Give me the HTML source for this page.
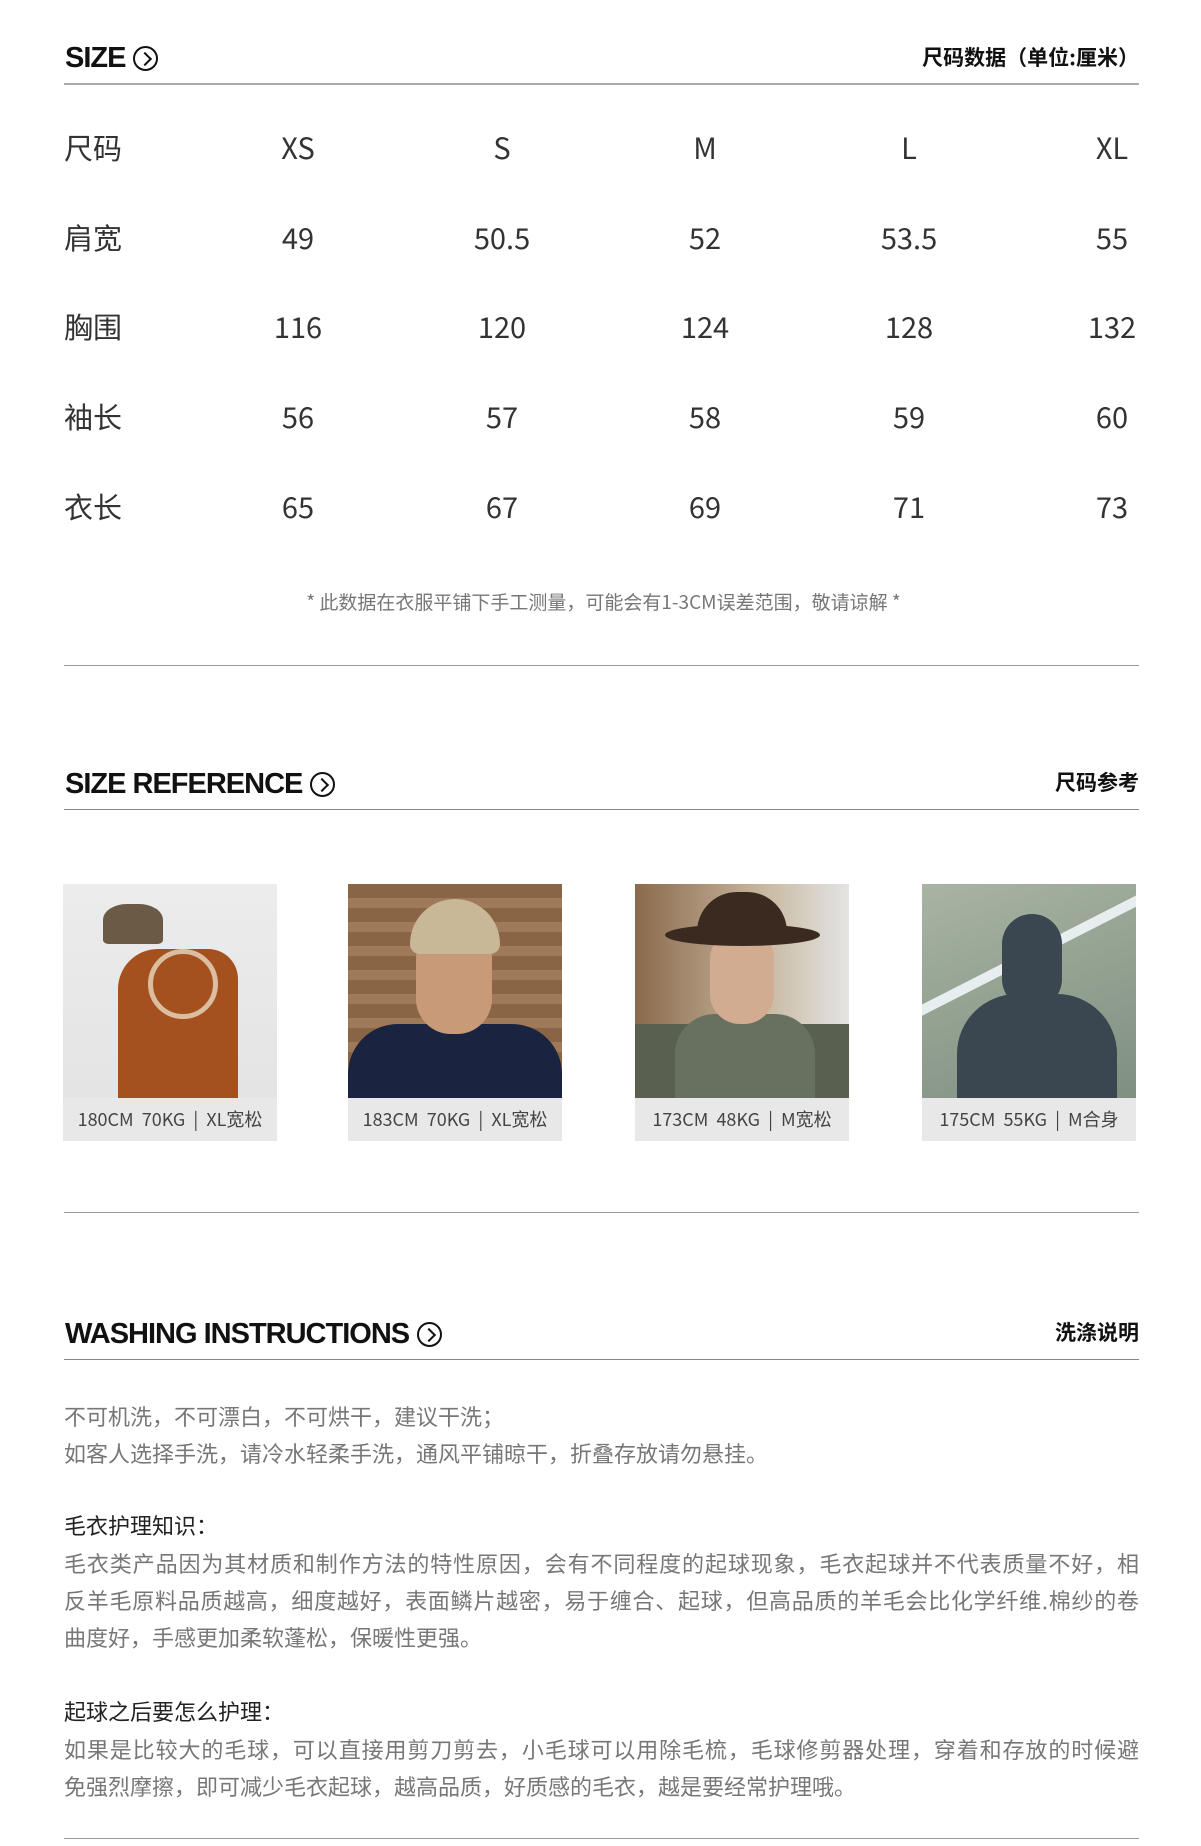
<!DOCTYPE html>
<html><head><meta charset="utf-8"><style>
*{margin:0;padding:0;box-sizing:border-box}
body{width:1201px;height:1846px;background:#fff;position:relative;font-family:"Noto Sans CJK SC","Liberation Sans",sans-serif;color:#222;overflow:hidden}
.a{position:absolute}
.h{font-family:"Liberation Sans",sans-serif;font-weight:bold;font-size:29px;letter-spacing:-1px;color:#111;white-space:nowrap;display:flex;align-items:center}
.ic{display:inline-block;width:25px;height:25px;border:2px solid #111;border-radius:50%;margin-left:8px;position:relative}
.ic:after{content:"";position:absolute;left:5px;top:6px;width:8px;height:8px;border-right:2px solid #111;border-top:2px solid #111;transform:rotate(45deg)}
.r{font-size:21px;font-weight:bold;color:#111;white-space:nowrap;line-height:30px}
.line{left:64px;width:1075px;height:2px;background:#aaa}
.thin{left:64px;width:1075px;height:1px;background:#999}
.row{left:64px;width:1075px;height:40px;font-size:29px;line-height:40px;color:#333}
.row span{position:absolute;top:0;transform:translateX(-50%)}
.row span:first-child{transform:none;left:0}
.p{left:64px;width:1075px;font-size:22px;color:#777;line-height:37px;white-space:nowrap}
.p div.j{text-align:justify;text-align-last:justify}
.b{color:#222}
.img{width:214px;height:257px;top:884px;overflow:hidden;background:#e8e8e8}
.img .ph{height:214px;position:relative;overflow:hidden}
.img .cap{height:43px;line-height:43px;font-size:18px;color:#444;text-align:center;white-space:nowrap}
</style></head><body>

<div class="a h" style="left:65px;top:42px">SIZE<span class="ic"></span></div>
<div class="a r" style="right:62px;top:42px">尺码数据（单位:厘米）</div>
<div class="a line" style="top:83px"></div>

<div class="a row" style="top:127px"><span>尺码</span><span style="left:234px">XS</span><span style="left:438px">S</span><span style="left:641px">M</span><span style="left:845px">L</span><span style="left:1048px">XL</span></div>
<div class="a row" style="top:217px"><span>肩宽</span><span style="left:234px">49</span><span style="left:438px">50.5</span><span style="left:641px">52</span><span style="left:845px">53.5</span><span style="left:1048px">55</span></div>
<div class="a row" style="top:306px"><span>胸围</span><span style="left:234px">116</span><span style="left:438px">120</span><span style="left:641px">124</span><span style="left:845px">128</span><span style="left:1048px">132</span></div>
<div class="a row" style="top:396px"><span>袖长</span><span style="left:234px">56</span><span style="left:438px">57</span><span style="left:641px">58</span><span style="left:845px">59</span><span style="left:1048px">60</span></div>
<div class="a row" style="top:486px"><span>衣长</span><span style="left:234px">65</span><span style="left:438px">67</span><span style="left:641px">69</span><span style="left:845px">71</span><span style="left:1048px">73</span></div>

<div class="a" style="left:0;width:1207px;top:589px;text-align:center;font-size:19px;line-height:26px;color:#777">* 此数据在衣服平铺下手工测量，可能会有1-3CM误差范围，敬请谅解 *</div>
<div class="a thin" style="top:665px"></div>

<div class="a h" style="left:65px;top:768px">SIZE REFERENCE<span class="ic"></span></div>
<div class="a r" style="right:62px;top:767px">尺码参考</div>
<div class="a line" style="top:809px;height:1px;background:#888"></div>

<div class="a img" style="left:63px"><div class="ph" style="background:linear-gradient(#ececec,#e4e4e4)">
<div class="a" style="left:55px;top:65px;width:120px;height:160px;background:#a4511f;border-radius:40px 30px 0 0"></div>
<div class="a" style="left:40px;top:20px;width:60px;height:40px;background:#6b5a45;border-radius:40% 40% 10% 10%"></div>
<div class="a" style="left:85px;top:65px;width:70px;height:70px;border:5px solid #e8d8c0;border-radius:50%;opacity:.8"></div>
</div><div class="cap">180CM&nbsp; 70KG &nbsp;|&nbsp; XL宽松</div></div>

<div class="a img" style="left:348px"><div class="ph" style="background:repeating-linear-gradient(#8a6545 0 14px,#a07a58 14px 24px)">
<div class="a" style="left:0;top:140px;width:214px;height:74px;background:#1a2440;border-radius:50px 50px 0 0"></div>
<div class="a" style="left:68px;top:40px;width:76px;height:110px;background:#c89a78;border-radius:35px"></div>
<div class="a" style="left:62px;top:15px;width:90px;height:55px;background:#c8b898;border-radius:45px 45px 10px 10px"></div>
</div><div class="cap">183CM&nbsp; 70KG &nbsp;|&nbsp; XL宽松</div></div>

<div class="a img" style="left:635px"><div class="ph" style="background:linear-gradient(90deg,#8a6a4c,#c8b8a0 60%,#e4e4e4)">
<div class="a" style="left:0;top:140px;width:214px;height:74px;background:#5a6050"></div>
<div class="a" style="left:40px;top:130px;width:140px;height:84px;background:#687060;border-radius:40px 40px 0 0"></div>
<div class="a" style="left:75px;top:45px;width:64px;height:95px;background:#d2ac90;border-radius:30px"></div>
<div class="a" style="left:30px;top:40px;width:155px;height:22px;background:#3a2a20;border-radius:50%"></div>
<div class="a" style="left:62px;top:8px;width:90px;height:45px;background:#3a2a20;border-radius:40px 40px 5px 5px"></div>
</div><div class="cap">173CM&nbsp; 48KG &nbsp;|&nbsp; M宽松</div></div>

<div class="a img" style="left:922px"><div class="ph" style="background:linear-gradient(160deg,#a8b4a4,#7f8f80)">
<div class="a" style="left:-20px;top:60px;width:280px;height:10px;background:#e8eef0;transform:rotate(-27deg)"></div>
<div class="a" style="left:35px;top:110px;width:160px;height:110px;background:#3a4650;border-radius:60px 60px 0 0"></div>
<div class="a" style="left:80px;top:30px;width:60px;height:95px;background:#3a4650;border-radius:30px"></div>
</div><div class="cap">175CM&nbsp; 55KG &nbsp;|&nbsp; M合身</div></div>

<div class="a thin" style="top:1212px"></div>

<div class="a h" style="left:65px;top:1318px">WASHING INSTRUCTIONS<span class="ic"></span></div>
<div class="a r" style="right:62px;top:1317px">洗涤说明</div>
<div class="a line" style="top:1359px;height:1px;background:#888"></div>

<div class="a p" style="top:1398px">不可机洗，不可漂白，不可烘干，建议干洗；<br>如客人选择手洗，请冷水轻柔手洗，通风平铺晾干，折叠存放请勿悬挂。</div>
<div class="a p b" style="top:1507px">毛衣护理知识：</div>
<div class="a p" style="top:1545px"><div class="j">毛衣类产品因为其材质和制作方法的特性原因，会有不同程度的起球现象，毛衣起球并不代表质量不好，相</div><div class="j">反羊毛原料品质越高，细度越好，表面鳞片越密，易于缠合、起球，但高品质的羊毛会比化学纤维.棉纱的卷</div><div>曲度好，手感更加柔软蓬松，保暖性更强。</div></div>
<div class="a p b" style="top:1693px">起球之后要怎么护理：</div>
<div class="a p" style="top:1731px"><div class="j">如果是比较大的毛球，可以直接用剪刀剪去，小毛球可以用除毛梳，毛球修剪器处理，穿着和存放的时候避</div><div>免强烈摩擦，即可减少毛衣起球，越高品质，好质感的毛衣，越是要经常护理哦。</div></div>
<div class="a thin" style="top:1838px"></div>
</body></html>
